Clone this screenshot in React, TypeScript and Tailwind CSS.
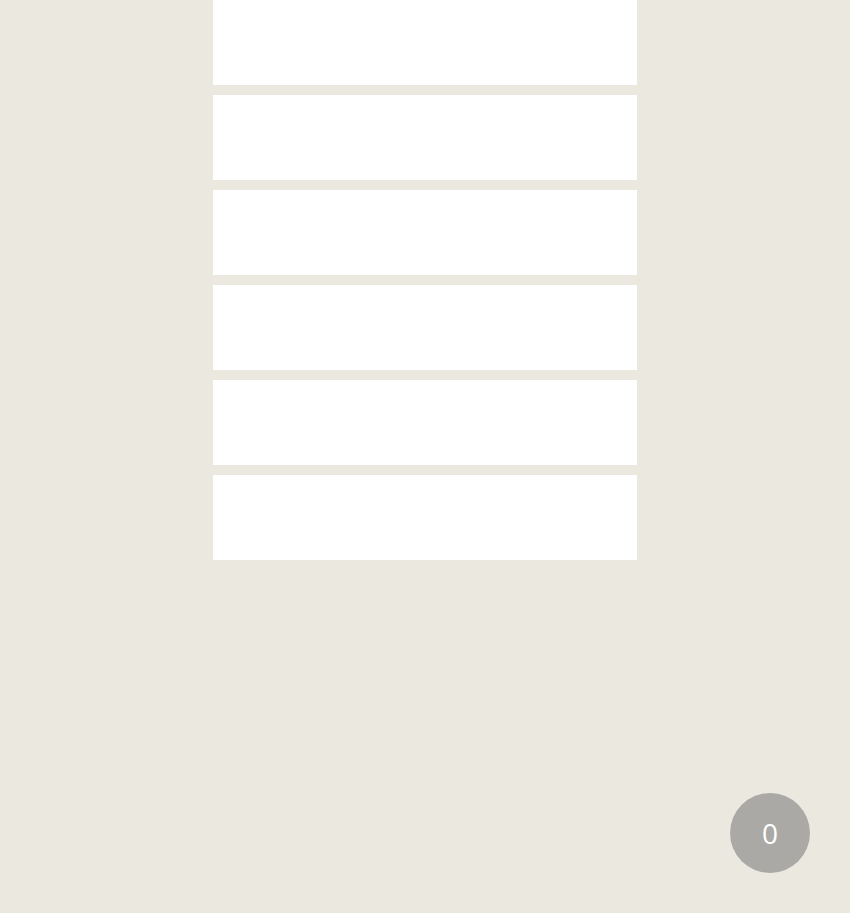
import React from "react";

const App: React.FC = () => {
  const rows = [0, 1, 2, 3, 4, 5];

  return (
    <div className="min-h-screen bg-[#ebe8e0]" style={{ fontFamily: '"Open Sans", sans-serif' }}>
      <div className="w-[424px] mx-auto flex flex-col gap-[10px]">
        {rows.map((r) => (
          <div key={r} className="h-[85px] bg-white" />
        ))}
      </div>
      <div className="fixed right-[40px] bottom-[40px] w-[80px] h-[80px] rounded-full bg-[#aaa9a5] flex items-center justify-center text-white text-[28px]">
        0
      </div>
    </div>
  );
};

export default App;
